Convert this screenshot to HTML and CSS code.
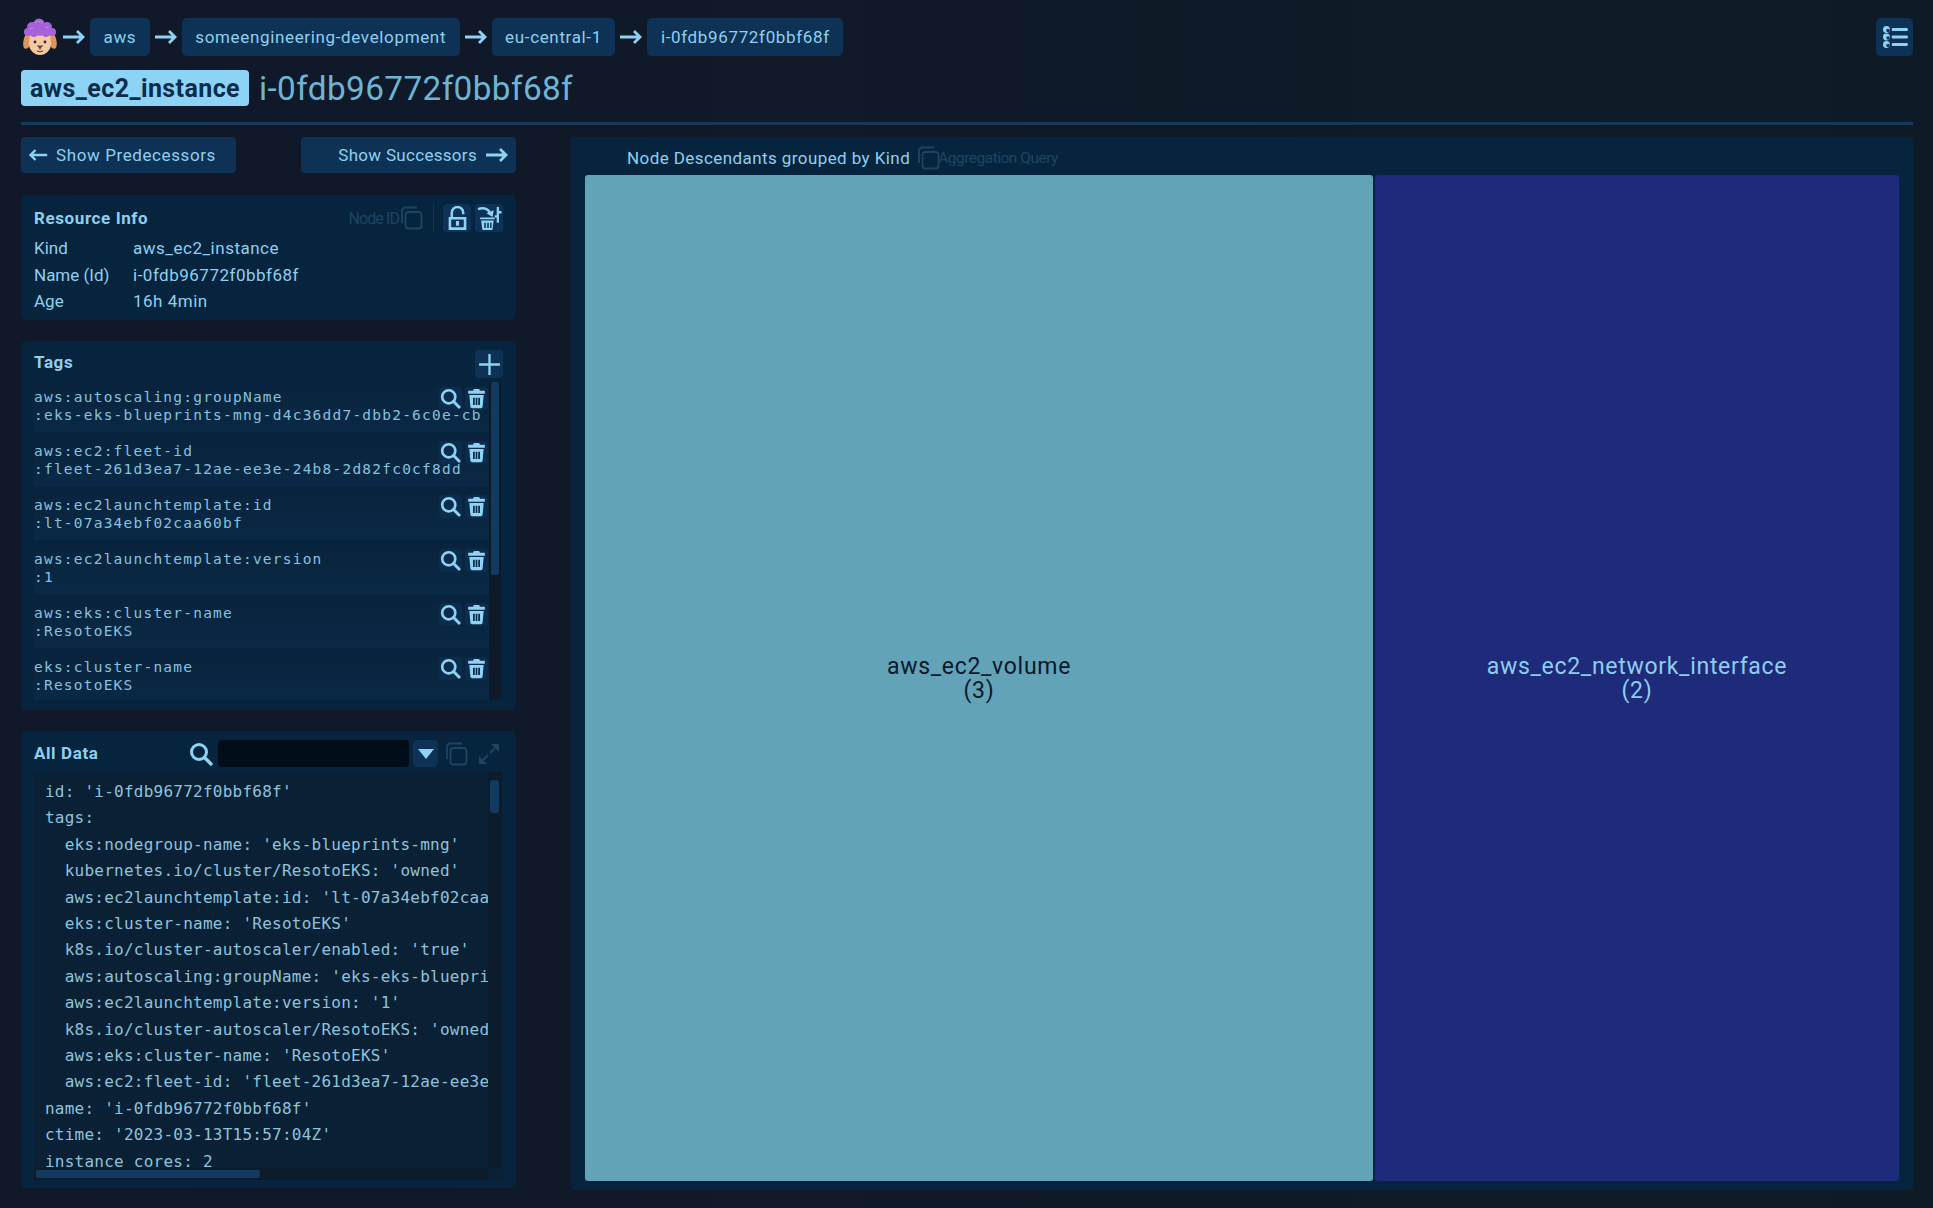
FILE: index.html
```html
<!DOCTYPE html>
<html lang="en">
<head>
    <meta charset="UTF-8">
    <title>Resource Detail</title>
    <link rel="stylesheet" href="styles.css">
</head>
<body>
    <svg class="sprite" xmlns="http://www.w3.org/2000/svg">
        <symbol id="i-search" viewBox="0 0 24 24"><circle cx="10" cy="10" r="7.500" fill="none" stroke="currentColor" stroke-width="3"/><path d="M15.500 15.500l6.500 6.500" stroke="currentColor" stroke-width="3.400" stroke-linecap="round"/></symbol>
        <symbol id="i-trash" viewBox="0 0 24 24"><path fill="currentColor" fill-rule="evenodd" d="M9 1h6l1 2h5.500v3.500h-19V3H8zM3.800 8h16.400l-1.200 13c-.1 1-1 2-2 2H7c-1 0-1.900-1-2-2zM8 11v8.500h2V11zm3 0v8.500h2V11zm3 0v8.500h2V11z"/></symbol>
        <symbol id="i-copy" viewBox="0 0 24 24"><rect x="6.500" y="6" width="16" height="16.500" rx="3" fill="none" stroke="currentColor" stroke-width="1.800"/><path d="M3 17V5c0-2 1.500-3.500 3.500-3.500H18" fill="none" stroke="currentColor" stroke-width="1.800"/></symbol>
        <symbol id="i-arrow" viewBox="0 0 24 16"><path d="M1 8h20M15 2l6 6-6 6" fill="none" stroke="currentColor" stroke-width="2.800"/></symbol>
    </svg>

    <header class="crumbs">
        <svg class="avatar" viewBox="0 0 36 38" aria-hidden="true">
            <path fill="#d9965f" d="M5 14c-3 4-5 12-3 16 2 2 5 0 6-3l1-11zM31 14c3 4 5 12 3 16-2 2-5 0-6-3l-1-11z"/>
            <path fill="#f2c9a4" d="M8 14h20l1 12c0 6-5 11-11 11S7 32 7 26z"/>
            <g fill="#a662d9">
                <circle cx="17" cy="6" r="5.500"/><circle cx="10" cy="9" r="5"/><circle cx="25" cy="9" r="5"/>
                <circle cx="6" cy="14" r="4"/><circle cx="30" cy="14" r="4"/><circle cx="12" cy="15" r="4"/>
                <circle cx="18" cy="13" r="5"/><circle cx="24" cy="15" r="4"/>
            </g>
            <path d="M13 5c2-2 6-2 8 0M8 11c1-1 3-1 4 0M23 10c1-1 3-1 4 0" fill="none" stroke="#c088ea" stroke-width="1"/>
            <circle cx="13" cy="24" r="1.400" fill="#3a2a20"/><circle cx="23" cy="24" r="1.400" fill="#3a2a20"/>
            <path d="M16 28h4l-2 2zM18 30v2M15 33c2 1 4 1 6 0" fill="none" stroke="#5a3a28" stroke-width="1.100"/>
        </svg>
        <svg class="crumb-arrow"><use href="#i-arrow"/></svg>
        <span class="chip">aws</span>
        <svg class="crumb-arrow"><use href="#i-arrow"/></svg>
        <span class="chip">someengineering-development</span>
        <svg class="crumb-arrow"><use href="#i-arrow"/></svg>
        <span class="chip">eu-central-1</span>
        <svg class="crumb-arrow"><use href="#i-arrow"/></svg>
        <span class="chip">i-0fdb96772f0bbf68f</span>
        <button class="list-btn" aria-label="Resource list">
            <svg viewBox="0 0 28 24"><g fill="#8fd3f4"><circle cx="6" cy="5" r="3.200"/><circle cx="6" cy="12" r="3.200"/><circle cx="6" cy="19" r="3.200"/><rect x="11" y="3.500" width="15" height="3" rx="1"/><rect x="11" y="10.500" width="15" height="3" rx="1"/><rect x="11" y="17.500" width="15" height="3" rx="1"/></g><g fill="#0d3255"><circle cx="7.500" cy="6" r="1.600"/><circle cx="7.500" cy="13" r="1.600"/><circle cx="7.500" cy="20" r="1.600"/></g></svg>
        </button>
    </header>

    <div class="title-row">
        <span class="kind-chip">aws_ec2_instance</span>
        <h1>i-0fdb96772f0bbf68f</h1>
    </div>
    <hr class="rule">

    <main class="layout">
        <div class="side">
            <div class="nav-row">
                <button class="nav-btn"><svg class="nav-arrow flip"><use href="#i-arrow"/></svg>Show Predecessors</button>
                <button class="nav-btn right">Show Successors<svg class="nav-arrow"><use href="#i-arrow"/></svg></button>
            </div>

            <section class="card info">
                <div class="card-head">
                    <h2>Resource Info</h2>
                    <span class="dim-label">Node ID</span>
                    <svg class="dim-icon"><use href="#i-copy"/></svg>
                    <span class="divider"></span>
                    <button class="icon-btn">
                        <svg viewBox="0 0 24 24"><path d="M6.500 11V6.500a5.500 5.500 0 0 1 11 0V8" fill="none" stroke="currentColor" stroke-width="2.400"/><path fill="currentColor" fill-rule="evenodd" d="M3.500 10.500h17v12.500h-17zM6 13v7.500h12V13zM10.500 14.500h3V19h-3z"/></svg>
                    </button>
                    <button class="icon-btn">
                        <svg viewBox="0 0 24 24"><path fill="currentColor" fill-rule="evenodd" d="M3 11h14v1.800h-14zM4 14h12l-1 8c-.1.700-.6 1-1.200 1H6.200c-.6 0-1.100-.3-1.200-1zM7 16v5h1.500v-5zm2.800 0v5h1.500v-5zm2.800 0v5H14v-5z"/><path d="M1 3c5-2 10-1 12 5" fill="none" stroke="currentColor" stroke-width="2.400"/><path fill="currentColor" d="M9 7l6 3.500 1-6.500z"/><path d="M20 1v15M20 6h3.500M17 10h3" stroke="currentColor" stroke-width="2.200"/></svg>
                    </button>
                </div>
                <dl class="facts">
                    <dt>Kind</dt><dd>aws_ec2_instance</dd>
                    <dt>Name (Id)</dt><dd>i-0fdb96772f0bbf68f</dd>
                    <dt>Age</dt><dd>16h 4min</dd>
                </dl>
            </section>

            <section class="card tags">
                <div class="card-head">
                    <h2>Tags</h2>
                    <button class="icon-btn push">
                        <svg viewBox="0 0 24 24"><path d="M12 2v20M2 12h20" stroke="currentColor" stroke-width="2.200"/></svg>
                    </button>
                </div>
                <div class="tag-scroll">
                    <ul class="tag-list">
                        <li class="tag">aws:autoscaling:groupName
:eks-eks-blueprints-mng-d4c36dd7-dbb2-6c0e-cb<span class="tag-actions"><svg><use href="#i-search"/></svg><svg><use href="#i-trash"/></svg></span></li>
                        <li class="tag">aws:ec2:fleet-id
:fleet-261d3ea7-12ae-ee3e-24b8-2d82fc0cf8dd<span class="tag-actions"><svg><use href="#i-search"/></svg><svg><use href="#i-trash"/></svg></span></li>
                        <li class="tag">aws:ec2launchtemplate:id
:lt-07a34ebf02caa60bf<span class="tag-actions"><svg><use href="#i-search"/></svg><svg><use href="#i-trash"/></svg></span></li>
                        <li class="tag">aws:ec2launchtemplate:version
:1<span class="tag-actions"><svg><use href="#i-search"/></svg><svg><use href="#i-trash"/></svg></span></li>
                        <li class="tag">aws:eks:cluster-name
:ResotoEKS<span class="tag-actions"><svg><use href="#i-search"/></svg><svg><use href="#i-trash"/></svg></span></li>
                        <li class="tag">eks:cluster-name
:ResotoEKS<span class="tag-actions"><svg><use href="#i-search"/></svg><svg><use href="#i-trash"/></svg></span></li>
                    </ul>
                    <div class="track"><div class="thumb"></div></div>
                </div>
            </section>

            <section class="card data">
                <div class="data-head">
                    <h2>All Data</h2>
                    <svg class="data-search"><use href="#i-search"/></svg>
                    <input class="data-input" type="text">
                    <button class="drop-btn"><span class="caret"></span></button>
                    <svg class="dim-icon"><use href="#i-copy"/></svg>
                    <svg class="dim-icon expand" viewBox="0 0 24 24"><path d="M14 2h8v8zM2 22v-8l8 8z" fill="currentColor"/><path d="M18 6l-5 5M6 18l5-5" stroke="currentColor" stroke-width="2"/></svg>
                </div>
                <div class="code-box">
                    <pre class="code">id: 'i-0fdb96772f0bbf68f'
tags:
  eks:nodegroup-name: 'eks-blueprints-mng'
  kubernetes.io/cluster/ResotoEKS: 'owned'
  aws:ec2launchtemplate:id: 'lt-07a34ebf02caa60bf'
  eks:cluster-name: 'ResotoEKS'
  k8s.io/cluster-autoscaler/enabled: 'true'
  aws:autoscaling:groupName: 'eks-eks-blueprints-mng'
  aws:ec2launchtemplate:version: '1'
  k8s.io/cluster-autoscaler/ResotoEKS: 'owned'
  aws:eks:cluster-name: 'ResotoEKS'
  aws:ec2:fleet-id: 'fleet-261d3ea7-12ae-ee3e-24b8'
name: 'i-0fdb96772f0bbf68f'
ctime: '2023-03-13T15:57:04Z'
instance cores: 2</pre>
                    <div class="code-track-v"><div class="code-thumb-v"></div></div>
                    <div class="code-track-h"><div class="code-thumb-h"></div></div>
                </div>
            </section>
        </div>

        <section class="chart">
            <div class="chart-head">
                <span class="chart-title">Node Descendants grouped by Kind</span>
                <svg class="dim-icon"><use href="#i-copy"/></svg>
                <span class="dim-label small">Aggregation Query</span>
            </div>
            <div class="treemap">
                <div class="tile volume">aws_ec2_volume<br>(3)</div>
                <div class="tile network">aws_ec2_network_interface<br>(2)</div>
            </div>
        </section>
    </main>
</body>
</html>
```

FILE: styles.css
```css
* {
    box-sizing: border-box;
}
html, body {
    height: 100%;
}
body {
    margin: 0;
    padding: 18px 20px 18px 21px;
    overflow: hidden;
    font-family: Roboto, "Open Sans", sans-serif;
    color: #8fd0ee;
    background: linear-gradient(90deg, #101829, #0e1b26);
}
.sprite {
    position: absolute;
    width: 0;
    height: 0;
}
button {
    font: inherit;
    color: inherit;
    border: none;
    padding: 0;
    cursor: pointer;
}

/* breadcrumb */
.crumbs {
    display: flex;
    align-items: center;
    height: 38px;
}
.avatar {
    width: 36px;
    height: 38px;
    margin-left: 1px;
}
.crumb-arrow {
    width: 24px;
    height: 16px;
    margin: 0 4px;
    color: #8fd3f4;
}
.chip {
    display: flex;
    align-items: center;
    height: 38px;
    padding: 0 13.500px;
    background-color: #0d3255;
    border-radius: 5px;
    font-size: 17px;
    letter-spacing: 0.65px;
    white-space: nowrap;
}
.list-btn {
    display: flex;
    align-items: center;
    justify-content: center;
    width: 37px;
    height: 38px;
    margin-left: auto;
    background-color: #0d3255;
    border-radius: 5px;
}
.list-btn svg {
    width: 30px;
    height: 26px;
}

/* title */
.title-row {
    display: flex;
    align-items: center;
    margin-top: 14px;
}
.kind-chip {
    display: flex;
    align-items: center;
    justify-content: center;
    width: 228px;
    height: 36px;
    background-color: #8cd3f5;
    color: #0c2c4c;
    border-radius: 4px;
    font-size: 25px;
    font-weight: 700;
    letter-spacing: 0.4px;
    white-space: nowrap;
}
h1 {
    margin: 2px 0 0 10px;
    font-size: 33.300px;
    font-weight: 400;
    line-height: 34px;
    color: #6db5d3;
    letter-spacing: 0.4px;
}
.rule {
    height: 3px;
    margin: 16px 0 12px;
    border: none;
    background-color: #153a5c;
}

/* page columns */
.layout {
    display: flex;
    gap: 55px;
}
.side {
    width: 495px;
    flex: none;
}
.nav-row {
    display: flex;
    justify-content: space-between;
    margin-bottom: 22px;
}
.nav-btn {
    display: flex;
    align-items: center;
    gap: 8px;
    width: 215px;
    height: 36px;
    padding: 0 7px;
    background-color: #0d3255;
    border-radius: 4px;
    font-size: 17px;
    letter-spacing: 0.6px;
    white-space: nowrap;
}
.nav-btn.right {
    justify-content: flex-end;
    letter-spacing: 0.3px;
}
.nav-arrow {
    width: 24px;
    height: 16px;
    color: #8fd3f4;
    flex: none;
}
.nav-arrow.flip {
    width: 20px;
    transform: scaleX(-1);
}

/* cards */
.card {
    background-color: #07243f;
    border-radius: 5px;
    padding: 9px 13px;
    margin-bottom: 21px;
}
.card-head {
    display: flex;
    align-items: center;
    height: 28px;
}
h2 {
    margin: 0;
    font-size: 17px;
    font-weight: 700;
    letter-spacing: 0.6px;
    color: #8fd0ee;
}
.dim-label {
    margin-left: auto;
    font-size: 16px;
    letter-spacing: -0.9px;
    color: #1d4463;
}
.dim-label.small {
    margin-left: -8px;
    font-size: 15.500px;
    letter-spacing: -0.5px;
}
.dim-icon {
    width: 24px;
    height: 24px;
    color: #1d4463;
    flex: none;
}
.divider {
    width: 1px;
    height: 28px;
    margin: 0 5px 0 10px;
    background-color: #123553;
}
.icon-btn {
    display: flex;
    align-items: center;
    justify-content: center;
    width: 28px;
    height: 28px;
    margin-left: 4px;
    background-color: #0d3255;
    border-radius: 4px;
    color: #8fd3f4;
}
.icon-btn svg {
    width: 25px;
    height: 25px;
}
.icon-btn.push {
    margin-left: auto;
}
.info {
    height: 125px;
}
.facts {
    display: grid;
    grid-template-columns: 99px 1fr;
    margin: 3px 0 0;
    font-size: 17px;
    line-height: 26.500px;
}
.facts dd {
    margin: 0;
    letter-spacing: 0.5px;
}

/* tags */
.tags {
    height: 369px;
}
.tags h2 {
    margin-bottom: 4px;
}
.tag-scroll {
    display: flex;
    height: 318px;
    margin-top: 4px;
    margin-right: 2px;
}
.tag-list {
    flex: 1;
    min-width: 0;
    margin: 0;
    padding: 0;
    list-style: none;
    overflow: hidden;
}
.tag {
    position: relative;
    height: 50px;
    margin-bottom: 4px;
    padding-top: 6px;
    overflow: hidden;
    background: linear-gradient(180deg, #08233d, #0a2946);
    font-family: "DejaVu Sans Mono", monospace;
    font-size: 14.500px;
    letter-spacing: 1.220px;
    line-height: 18px;
    color: #86c2de;
    white-space: pre;
}
.tag-actions {
    position: absolute;
    top: 5px;
    right: 1px;
    display: flex;
    gap: 3px;
}
.tag-actions svg {
    width: 23px;
    height: 23px;
    padding: 1px;
    background-color: #0b2c4c;
    border-radius: 4px;
    color: #8fd3f4;
}
.track {
    flex: none;
    width: 12px;
    padding: 0 2px;
    background-color: #0e1a29;
    border-radius: 3px;
}
.thumb {
    height: 193px;
    background-color: #123a60;
    border-radius: 2px;
}

/* all data */
.data {
    height: 457px;
    margin-bottom: 0;
}
.data h2 {
    margin-bottom: 2px;
}
.data-head {
    display: flex;
    align-items: center;
    height: 27px;
}
.data-search {
    width: 24px;
    height: 24px;
    margin-left: auto;
    color: #8fd3f4;
}
.data-input {
    width: 191px;
    height: 27px;
    margin-left: 5px;
    background-color: #020d1a;
    border: none;
    border-radius: 4px;
}
.drop-btn {
    display: flex;
    align-items: center;
    justify-content: center;
    width: 25px;
    height: 27px;
    margin: 0 6px 0 4px;
    background-color: #0d3255;
    border-radius: 4px;
}
.caret {
    border-left: 8px solid transparent;
    border-right: 8px solid transparent;
    border-top: 10px solid #8fd3f4;
}
.expand {
    margin: 0 2px 0 9px;
}
.code-box {
    display: grid;
    grid-template-columns: 454px 14px;
    grid-template-rows: 396px 12px;
    margin-top: 5px;
    background-color: #0a2035;
    border-radius: 3px;
}
.code {
    margin: 0;
    padding: 7px 0 0 11px;
    overflow: hidden;
    font-family: "DejaVu Sans Mono", monospace;
    font-size: 16px;
    letter-spacing: 0.240px;
    line-height: 26.400px;
    color: #8ec3dc;
}
.code-track-v {
    padding: 8px 3px 0 2px;
    background-color: #0c1c2b;
}
.code-thumb-v {
    height: 33px;
    background-color: #123a60;
    border-radius: 3px;
}
.code-track-h {
    padding: 2px;
    background-color: #0c1c2b;
}
.code-thumb-h {
    width: 224px;
    height: 8px;
    background-color: #123a60;
    border-radius: 2px;
}

/* treemap */
.chart {
    flex: 1;
    height: 1053px;
    padding: 0 14px 9px 14px;
    background-color: #07243f;
    border-radius: 4px;
}
.chart-head {
    display: flex;
    align-items: center;
    gap: 6px;
    height: 38px;
    padding: 4px 0 0 42px;
    font-size: 17px;
}
.chart-title {
    letter-spacing: 0.42px;
}
.treemap {
    display: flex;
    gap: 2px;
    height: 1006px;
}
.tile {
    display: flex;
    align-items: center;
    justify-content: center;
    padding-top: 2px;
    text-align: center;
    border-radius: 3px;
    font-size: 23px;
    line-height: 24px;
    letter-spacing: 0.7px;
}
.volume {
    width: 788px;
    background-color: #62a3b7;
    color: #08182a;
}
.network {
    flex: 1;
    background-color: #1e2b7a;
    color: #8fcdf0;
}
```
